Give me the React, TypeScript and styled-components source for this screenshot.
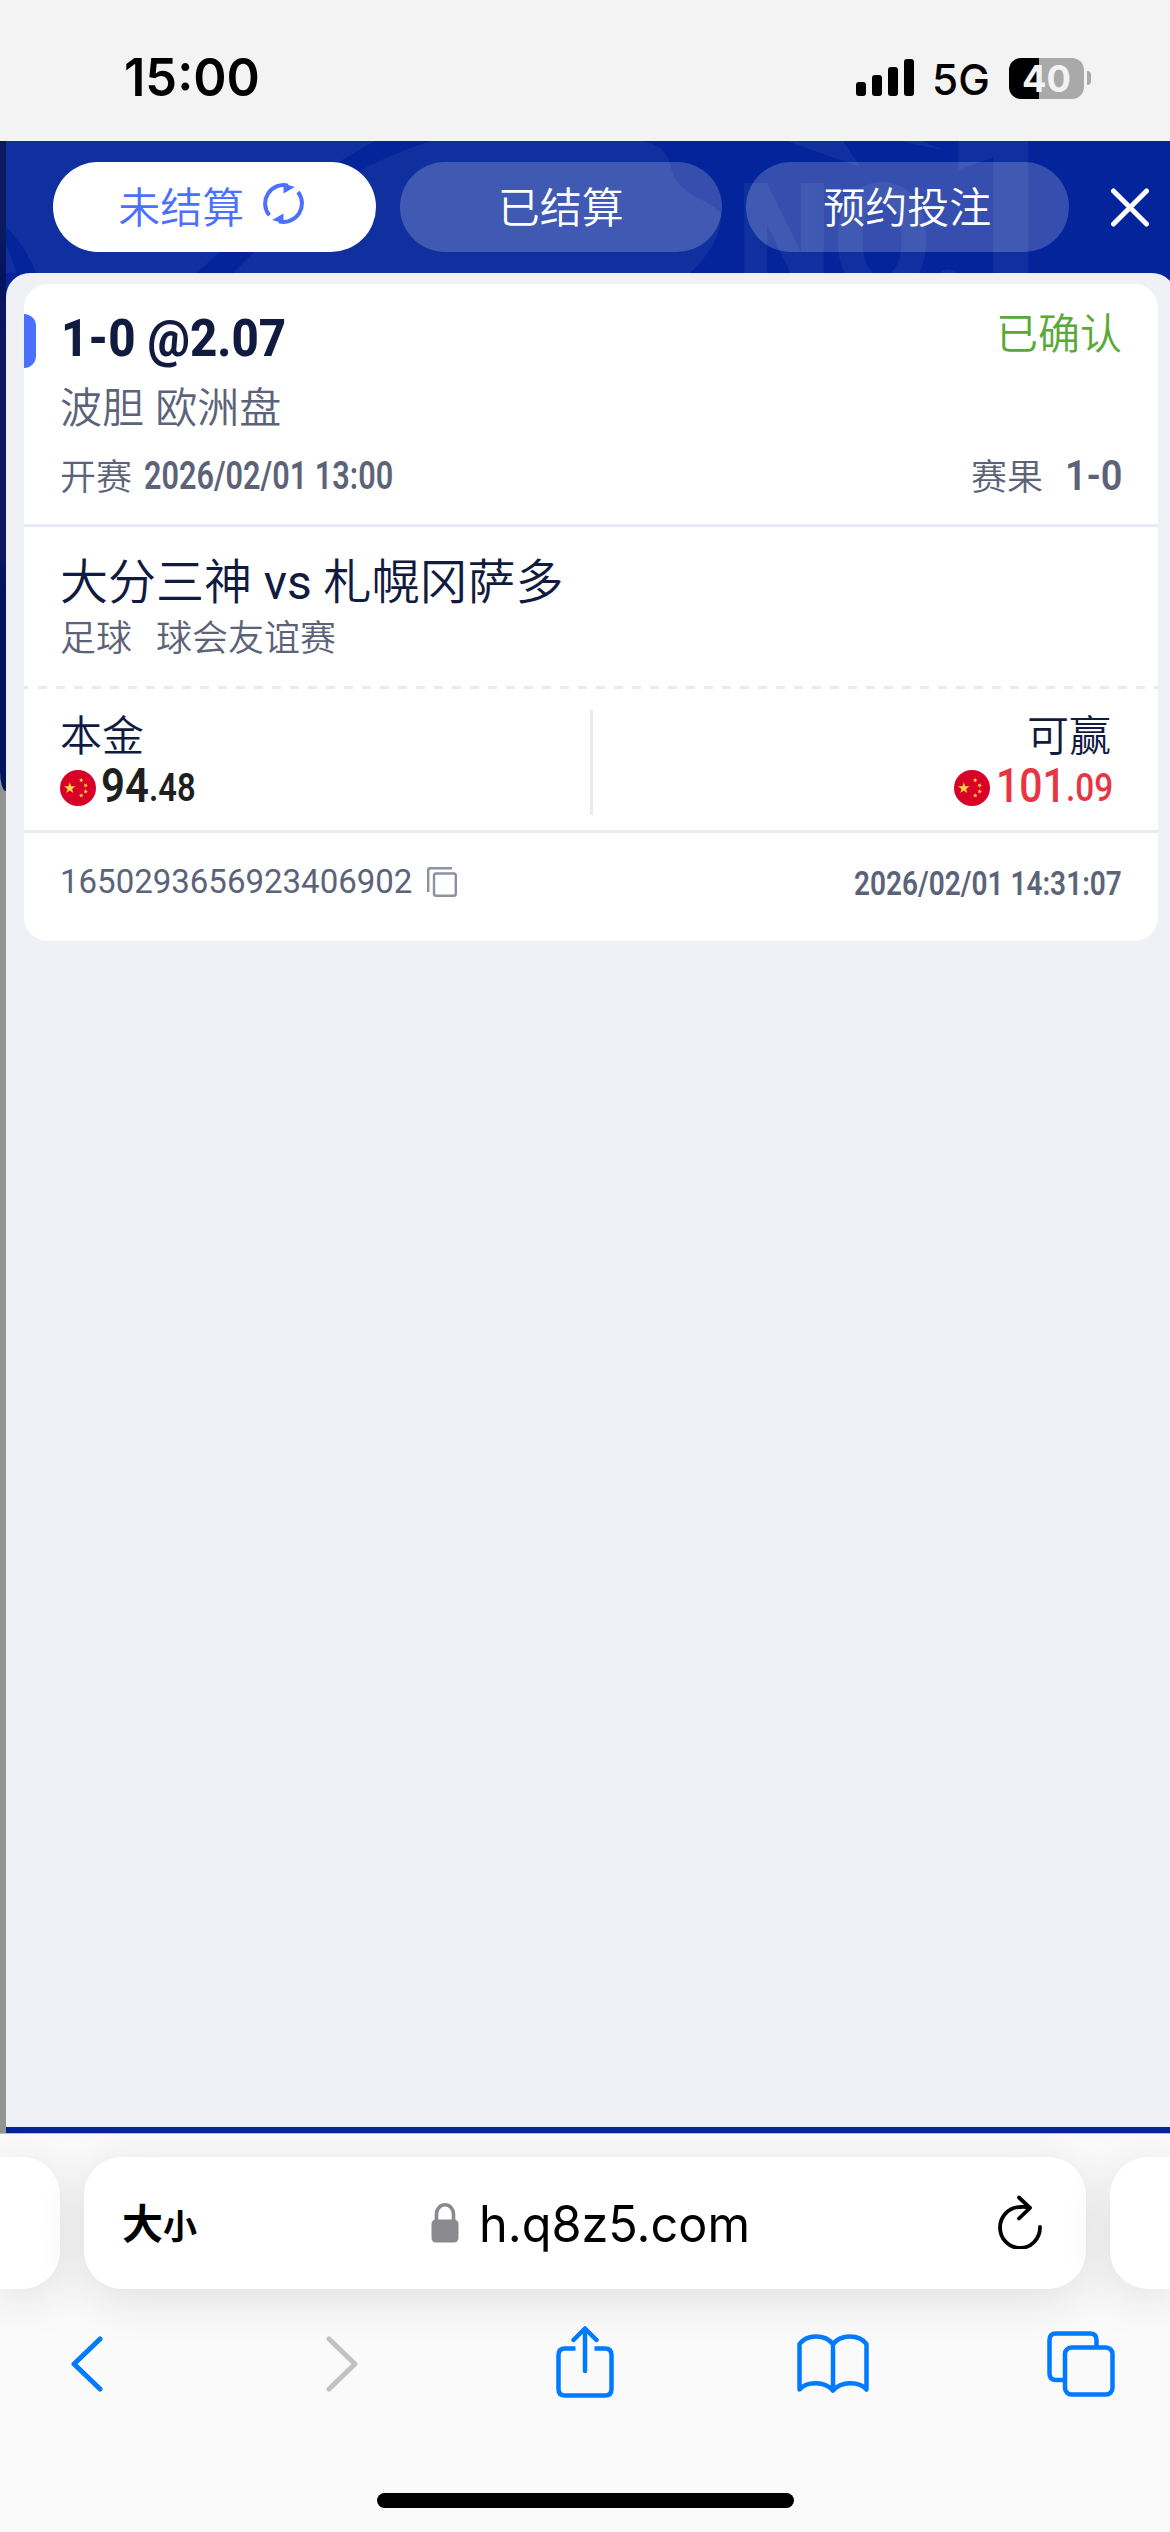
import React, { useLayoutEffect, useRef, useState } from 'react';
import styled, { createGlobalStyle } from 'styled-components';

const CJK = `'Noto Sans', 'Noto Sans CJK SC', sans-serif`;
const HAN = `'Noto Sans CJK SC', sans-serif`;
const NUM = `Roboto, 'Noto Sans CJK SC', sans-serif`;
const SYS = `Inter, 'Noto Sans CJK SC', sans-serif`;

const Global = createGlobalStyle`
  * { box-sizing: border-box; }
  body { margin: 0; background: #fafafa; }
  svg { display: block; flex: none; }
`;

/* Text condensed or widened to a set measure. */
const FitBox = styled.span<{ $w: number }>`
  display: block;
  flex: none;
  width: ${p => p.$w}px;
  white-space: nowrap;
`;
const FitInner = styled.span`
  display: inline-block;
  transform-origin: 0 50%;
`;
function Fit({ width, children }: { width: number; children: React.ReactNode }) {
  const ref = useRef<HTMLSpanElement>(null);
  const [scale, setScale] = useState(1);
  useLayoutEffect(() => {
    if (ref.current) setScale(width / ref.current.offsetWidth);
  }, [width]);
  return (
    <FitBox $w={width}>
      <FitInner ref={ref} style={{ transform: `scaleX(${scale})` }}>{children}</FitInner>
    </FitBox>
  );
}

const Screen = styled.div`
  width: 1170px;
  height: 2532px;
  display: flex;
  flex-direction: column;
  overflow: hidden;
  font-family: ${CJK};
`;

/* ---------- status bar ---------- */
const StatusBar = styled.header`
  flex: none;
  height: 141px;
  padding: 15px 79px 0 124px;
  background: #f3f3f3;
  display: flex;
  align-items: center;
  justify-content: space-between;
  font-family: ${SYS};
  color: #000;
`;
const Clock = styled.div`
  font-size: 52px;
  line-height: 60px;
  font-weight: 600;
`;
const StatusIcons = styled.div`
  display: flex;
  align-items: center;
`;
const Network = styled.div`
  margin: 2px 19px 0 18px;
  font-size: 43px;
  line-height: 50px;
  font-weight: 500;
`;
const Battery = styled.div`
  width: 75px;
  height: 41px;
  border-radius: 12px;
  background: linear-gradient(90deg, #000 30px, #a9a9a9 30px);
  color: #f3f3f3;
  font-size: 37px;
  line-height: 42px;
  font-weight: 700;
  display: flex;
  justify-content: center;
`;
const Nub = styled.div`
  width: 4px;
  height: 14px;
  margin-left: 3px;
  border-radius: 0 5px 5px 0;
  background: #a9a9a9;
`;

/* ---------- page ---------- */
const Page = styled.main`
  flex: none;
  height: 1993px;
  display: flex;
  border-bottom: 1px solid #b9bccb;
`;
const Behind = styled.div`
  flex: none;
  width: 6px;
  background: #939393;
`;
const BehindBlue = styled.div`
  height: 650px;
  border-radius: 0 0 0 24px / 0 0 0 80px;
  background: linear-gradient(#0b1a60 0 88px, #04135d 132px, #0b1a60 220px 410px, #02125c 450px);
`;
const Drawer = styled.section`
  position: relative;
  flex: none;
  width: 1170px;
  display: flex;
  flex-direction: column;
  background: #04249b;
`;
const HeaderArt = styled.svg`
  position: absolute;
  left: 0;
  top: 0;
`;
const Tabs = styled.nav`
  position: relative;
  flex: none;
  height: 132px;
  padding-left: 47px;
  display: flex;
  align-items: center;
  gap: 24px;
`;
const Tab = styled.button<{ $active?: boolean }>`
  width: 322.5px;
  height: 90px;
  padding: 0 ${p => (p.$active ? 6 : 0)}px 5px 0;
  border: 0;
  border-radius: 45px;
  background: ${p => (p.$active ? '#fff' : 'rgba(255,255,255,.2)')};
  color: ${p => (p.$active ? '#4b70ff' : '#fff')};
  font: 350 42px/60px ${HAN};
  display: flex;
  align-items: center;
  justify-content: center;
  gap: 19px;
`;
const RefreshIcon = styled.svg`
  margin-top: -2px;
`;
const Close = styled.button`
  margin-left: 18px;
  padding: 0;
  border: 0;
  background: none;
`;
const Sheet = styled.div`
  position: relative;
  flex: 1;
  margin-bottom: 6px;
  padding: 11px 18px;
  border-radius: 24px 24px 0 0;
  background: #f0f1f6;
`;
const Card = styled.article`
  width: 1134px;
  height: 657px;
  border-radius: 24px;
  background: #fff;
  overflow: hidden;
  display: flex;
  flex-direction: column;
  color: #111a3f;
`;
const Summary = styled.div`
  flex: none;
  height: 243px;
  padding: 17px 36px 0 0;
  border-bottom: 3px solid #e8eaf6;
`;
const Row = styled.div<{ $h: number; $pad?: number }>`
  height: ${p => p.$h}px;
  padding-left: ${p => p.$pad ?? 0}px;
  display: flex;
  align-items: center;
  justify-content: space-between;
`;
const Group = styled.div<{ $gap?: number }>`
  display: flex;
  align-items: center;
  gap: ${p => p.$gap ?? 0}px;
`;
const Marker = styled.div`
  width: 12px;
  height: 54px;
  margin-right: 25px;
  border-radius: 0 12px 12px 0;
  background: #4b70ff;
`;
const Odds = styled.div`
  font: 800 51px/58px ${NUM};
  display: flex;
  align-items: center;
`;
const OddsText = styled.div`
  padding-bottom: 4px;
`;
const State = styled.div`
  margin-top: -21px;
  font: 350 42px/60px ${HAN};
  color: #59a937;
`;
const Muted = styled.div<{ $size: number; $lift?: number }>`
  padding-bottom: ${p => p.$lift ?? 0}px;
  font: 350 ${p => p.$size}px/50px ${HAN};
  word-spacing: 2px;
  color: #5c6379;
  white-space: pre;
`;
const Num = styled.div<{ $size: number; $color?: string; $weight?: number; $top?: number }>`
  padding-top: ${p => p.$top ?? 0}px;
  font: ${p => p.$weight ?? 600} ${p => p.$size}px/50px ${NUM};
  color: ${p => p.$color ?? '#5c6379'};
`;
const Match = styled.div`
  flex: none;
  height: 159px;
  padding: 23px 36px 0;
`;
const Teams = styled.div`
  font: 350 48px/65px ${NUM};
`;
const Versus = styled.span`
  font-weight: 400;
`;
const League = styled.div`
  display: flex;
  gap: 24px;
  font: 350 36px/41px ${HAN};
  color: #5c6379;
`;
const Perforation = styled.div`
  flex: none;
  height: 3px;
  background: repeating-linear-gradient(90deg, #e8eaf6 0 4.5px, transparent 4.5px 13.5px, #e8eaf6 13.5px 18px);
`;
const Amounts = styled.div`
  flex: none;
  height: 144px;
  padding: 20px 45px 0 36px;
  border-bottom: 3px solid #e8eaf6;
  display: flex;
  align-items: flex-start;
`;
const Amount = styled.div<{ $right?: boolean }>`
  width: ${p => (p.$right ? 520 : 530)}px;
  display: flex;
  flex-direction: column;
  align-items: ${p => (p.$right ? 'flex-end' : 'flex-start')};
`;
const Label = styled.div<{ $shift?: number }>`
  margin: 0 ${p => p.$shift ?? 0}px 5px 0;
  font: 350 42px/47px ${HAN};
`;
const Money = styled.div`
  height: 50px;
  margin-top: 2px;
  display: flex;
  align-items: center;
`;
const Figures = styled.div`
  display: flex;
  padding-bottom: 2px;
`;
const Divider = styled.div`
  width: 3px;
  height: 105px;
  margin-top: 1px;
  background: #e8eaf6;
`;
const Spacer = styled.div<{ $w: number }>`
  flex: none;
  width: ${p => p.$w}px;
`;
const Foot = styled.div`
  height: 97px;
  padding: 0 36px;
  display: flex;
  align-items: center;
  justify-content: space-between;
`;

/* ---------- browser chrome ---------- */
const Browser = styled.footer`
  flex: 1;
  background: #fafafa;
  display: flex;
  flex-direction: column;
  align-items: center;
  overflow: hidden;
`;
const Cards = styled.div`
  flex: none;
  width: 1170px;
  padding-top: 23px;
  display: flex;
  gap: 24px;
`;
const Neighbour = styled.div<{ $side: 'l' | 'r' }>`
  width: 60px;
  height: 132px;
  border-radius: ${p => (p.$side === 'l' ? '0 38px 38px 0' : '38px 0 0 38px')};
  background: #fff;
  box-shadow: 0 10px 50px rgba(0, 0, 0, .11);
`;
const Address = styled.div`
  width: 1002px;
  height: 132px;
  padding: 0 44px 0 38px;
  border-radius: 38px;
  background: #fff;
  box-shadow: 0 10px 50px rgba(0, 0, 0, .11);
  display: flex;
  align-items: center;
  font-family: ${SYS};
`;
const TextSize = styled.div`
  width: 76px;
  padding-top: 5px;
  display: flex;
  align-items: baseline;
  font-weight: 700;
  font-size: 41px;
  line-height: 60px;
  white-space: nowrap;
`;
const Small = styled.span`
  font-size: 34px;
`;
const Host = styled.div`
  display: flex;
  align-items: center;
  margin: 0 auto 0 233px;
  gap: 20px;
  font-size: 50px;
  line-height: 60px;
`;
const HostText = styled.div`
  padding-top: 1px;
`;
const ReloadIcon = styled.svg`
  margin-top: -3px;
`;
const Toolbar = styled.div`
  flex: none;
  width: 1170px;
  height: 150px;
  display: grid;
  grid-template-columns: repeat(5, 248px);
  justify-content: center;
  align-items: center;
  justify-items: center;
`;
const ToolIcon = styled.svg<{ $dx?: number; $dy?: number }>`
  margin-left: ${p => p.$dx ?? 0}px;
  margin-top: ${p => p.$dy ?? 0}px;
`;
const HomeBar = styled.div`
  width: 417px;
  height: 15px;
  margin-top: 54px;
  border-radius: 8px;
  background: #000;
`;

const Art = () => (
  <HeaderArt width="1164" height="132" viewBox="6 141 1164 132">
    <g fill="#1130a0">
      <path d="M6 141H375Q285 190 197 273H36Q25 245 6 227ZM6 245Q12 258 16 273H6Z" />
      <path d="M432 141H637C663 143 668 155 671 168C677 195 706 197 721 213C722 236 708 256 690 273H233C290 214 350 165 432 141Z" />
      <path d="M787 141H843L860 167ZM900 141H922L943 150Z" />
      <g fontFamily="Roboto, sans-serif" fontWeight="900">
        <text x="737" y="294" fontSize="156" textLength="94" lengthAdjust="spacingAndGlyphs">N</text>
        <text x="833" y="294" fontSize="156" textLength="98" lengthAdjust="spacingAndGlyphs">O</text>
        <text x="930" y="294" fontSize="156" textLength="38" lengthAdjust="spacingAndGlyphs">.</text>
        <text x="941" y="294" fontSize="260" textLength="124" lengthAdjust="spacingAndGlyphs">1</text>
      </g>
    </g>
  </HeaderArt>
);

const star = (cx: number, cy: number, r: number, rot = 0) =>
  Array.from({ length: 10 }, (_, i) => {
    const a = ((i * 36 - 90 + rot) * Math.PI) / 180;
    const q = i % 2 ? r * 0.4 : r;
    return `${(cx + q * Math.cos(a)).toFixed(2)},${(cy + q * Math.sin(a)).toFixed(2)}`;
  }).join(' ');

const Flag = () => (
  <svg width="36" height="36" viewBox="0 0 36 36">
    <circle cx="18" cy="18" r="18" fill="#d80027" />
    <g fill="#ffda44">
      <polygon points={star(9.8, 18.2, 6)} />
      <polygon points={star(21.2, 10.2, 2.5, 10)} />
      <polygon points={star(25.6, 15.4, 2.5, 30)} />
      <polygon points={star(25.6, 21.6, 2.5, 5)} />
      <polygon points={star(21.2, 25.6, 2.5, 0)} />
    </g>
  </svg>
);

export default function App() {
  return (
    <Screen>
      <Global />
      <StatusBar>
        <Clock><Fit width={136}>15:00</Fit></Clock>
        <StatusIcons>
          <svg width="58" height="38" viewBox="0 0 58 38">
            <rect y="23" width="10" height="14" rx="3" />
            <rect x="16" y="16" width="10" height="21" rx="3" />
            <rect x="32" y="8" width="10" height="29" rx="3" />
            <rect x="48" width="10" height="37" rx="3" />
          </svg>
          <Network><Fit width={58}>5G</Fit></Network>
          <Battery><Fit width={49}>40</Fit></Battery>
          <Nub />
        </StatusIcons>
      </StatusBar>

      <Page>
        <Behind><BehindBlue /></Behind>
        <Drawer>
          <Art />
          <Tabs>
            <Tab $active>
              未结算
              <RefreshIcon width="41" height="41" viewBox="0 0 41 41" fill="none" stroke="#4b70ff" strokeWidth="4">
                <path d="M6.300 32.300A18.500 18.500 0 0 1 25 2.600M35 9A18.500 18.500 0 0 1 16 38.400" />
                <path d="M20.500 0.500L31.800 4L20.500 10.500ZM20.500 40.500L9.200 37L20.500 30.500Z" fill="#4b70ff" stroke="none" />
              </RefreshIcon>
            </Tab>
            <Tab>已结算</Tab>
            <Tab>预约投注</Tab>
            <Close>
              <svg width="38" height="39" viewBox="0 0 38 39" stroke="#fff" strokeWidth="5" strokeLinecap="round">
                <path d="M2.500 3L35.500 36M35.500 3L2.500 36" />
              </svg>
            </Close>
          </Tabs>

          <Sheet>
            <Card>
              <Summary>
                <Row $h={80}>
                  <Odds><Marker /><OddsText><Fit width={225}>1-0 @2.07</Fit></OddsText></Odds>
                  <State>已确认</State>
                </Row>
                <Row $h={56} $pad={36}><Muted $size={42} $lift={8}>波胆 欧洲盘</Muted></Row>
                <Row $h={78} $pad={36}>
                  <Group $gap={12}>
                    <Muted $size={36} $lift={4}>开赛</Muted>
                    <Num $size={38}><Fit width={249}>2026/02/01 13:00</Fit></Num>
                  </Group>
                  <Group $gap={22}>
                    <Muted $size={36} $lift={4}>赛果</Muted>
                    <Num $size={42}><Fit width={57}>1-0</Fit></Num>
                  </Group>
                </Row>
              </Summary>

              <Match>
                <Teams>大分三神 <Versus>vs</Versus> 札幌冈萨多</Teams>
                <League><span>足球</span><span>球会友谊赛</span></League>
              </Match>
              <Perforation />

              <Amounts>
                <Amount>
                  <Label>本金</Label>
                  <Money>
                    <Flag />
                    <Spacer $w={5} />
                    <Figures>
                      <Num $size={48} $color="#1f1f1f"><Fit width={48}>94</Fit></Num>
                      <Num $size={39} $color="#1f1f1f" $top={2}><Fit width={47}>.48</Fit></Num>
                    </Figures>
                  </Money>
                </Amount>
                <Divider />
                <Amount $right>
                  <Label $shift={2}>可赢</Label>
                  <Money>
                    <Flag />
                    <Spacer $w={6} />
                    <Figures>
                      <Num $size={48} $color="#e93443" $weight={500}><Fit width={70}>101</Fit></Num>
                      <Num $size={39} $color="#e93443" $weight={500} $top={2}><Fit width={47}>.09</Fit></Num>
                    </Figures>
                  </Money>
                </Amount>
              </Amounts>

              <Foot>
                <Group $gap={15}>
                  <Num $size={33} $weight={400}>1650293656923406902</Num>
                  <svg width="30" height="30" viewBox="0 0 30 30" fill="none" stroke="#8d92a0" strokeWidth="2.400">
                    <rect x="7" y="6.500" width="21.800" height="22.300" rx="2" />
                    <path d="M1.200 25V3Q1.200 1.200 3 1.200H25" />
                  </svg>
                </Group>
                <Num $size={34} $top={3}><Fit width={268}>2026/02/01 14:31:07</Fit></Num>
              </Foot>
            </Card>
          </Sheet>
        </Drawer>
      </Page>

      <Browser>
        <Cards>
          <Neighbour $side="l" />
          <Address>
            <TextSize>大<Small>小</Small></TextSize>
            <Host>
              <svg width="28" height="40" viewBox="0 0 28 40">
                <path d="M5.500 18V11A8.500 9.200 0 0 1 22.500 11V18" fill="none" stroke="#8a898e" strokeWidth="3.600" />
                <rect x="0.500" y="16.500" width="27" height="23" rx="4.500" fill="#8a898e" />
              </svg>
              <HostText><Fit width={271}>h.q8z5.com</Fit></HostText>
            </Host>
            <ReloadIcon width="44" height="54" viewBox="0 0 44 54" fill="none" stroke="#000" strokeWidth="3.800" strokeLinecap="round" strokeLinejoin="round">
              <path d="M42 32A20 20.500 0 1 1 22 12Q27 11.300 32 12.800M21 2.500L32 12.800L21 23.500" />
            </ReloadIcon>
          </Address>
          <Neighbour $side="r" />
        </Cards>
        <Toolbar>
          <ToolIcon $dx={-5} width="36" height="56" viewBox="0 0 36 56" fill="none" stroke="#007aff" strokeWidth="5" strokeLinecap="round" strokeLinejoin="round">
            <path d="M31 3L5 28L31 53" />
          </ToolIcon>
          <ToolIcon $dx={9} width="36" height="56" viewBox="0 0 36 56" fill="none" stroke="#c2c2c3" strokeWidth="5" strokeLinecap="round" strokeLinejoin="round">
            <path d="M5 3L31 28L5 53" />
          </ToolIcon>
          <ToolIcon $dy={-4} width="58" height="72" viewBox="0 0 58 72" fill="none" stroke="#007aff" strokeWidth="4.500" strokeLinecap="round" strokeLinejoin="round">
            <path d="M19.500 22.500H9Q2.500 22.500 2.500 29V63Q2.500 69.500 9 69.500H49Q55.500 69.500 55.500 63V29Q55.500 22.500 49 22.500H38.500" strokeLinecap="butt" />
            <path d="M29 45V3M17.500 14L29 2.500L40.500 14" />
          </ToolIcon>
          <ToolIcon width="72" height="60" viewBox="0 0 72 60" fill="none" stroke="#007aff" strokeWidth="4.500" strokeLinecap="round" strokeLinejoin="round">
            <path d="M36 10C28 0 10 0 2.500 10V55.500C10 47 28 47 36 56.500C44 47 62 47 69.500 55.500V10C62 0 44 0 36 10V56.500" />
          </ToolIcon>
          <ToolIcon width="68" height="66" viewBox="0 0 68 66" fill="none" stroke="#007aff" strokeWidth="4.500">
            <rect x="18" y="16.500" width="47.500" height="47" rx="6.500" />
            <path d="M18 49H9Q2.500 49 2.500 42.500V9Q2.500 2.500 9 2.500H43Q49.500 2.500 49.500 9V16.500" />
          </ToolIcon>
        </Toolbar>
        <HomeBar />
      </Browser>
    </Screen>
  );
}
